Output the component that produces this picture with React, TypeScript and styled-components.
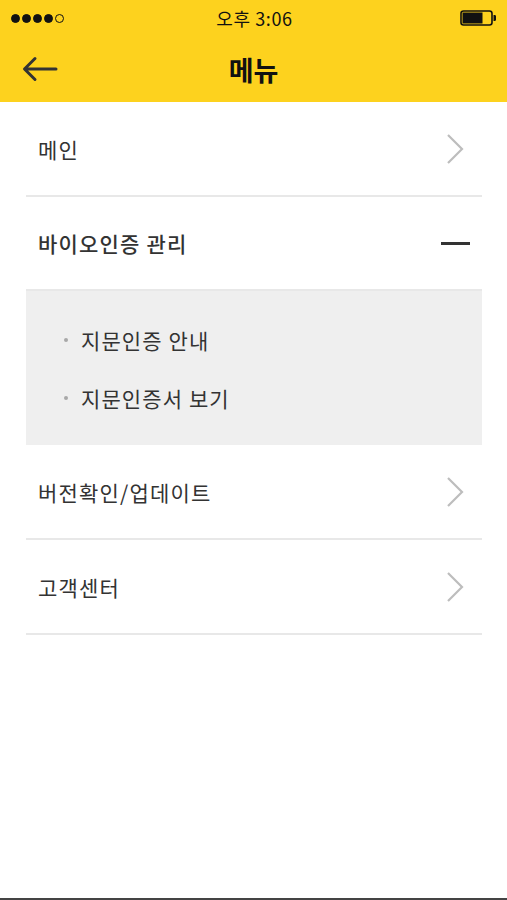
import React from "react";
import styled, { createGlobalStyle } from "styled-components";

const GlobalStyle = createGlobalStyle`
  html, body { margin: 0; padding: 0; background: #ffffff; }
  body { font-family: "Noto Sans CJK KR", "Noto Sans", sans-serif; }
  * { box-sizing: border-box; }
`;

const Screen = styled.div`
  width: 507px;
  height: 900px;
  display: flex;
  flex-direction: column;
  background: #ffffff;
  border-bottom: 2px solid #444444;
`;

const Header = styled.header`
  background: #fdd21e;
  height: 102px;
  display: flex;
  flex-direction: column;
`;

const StatusBar = styled.div`
  height: 36px;
  display: grid;
  grid-template-columns: 1fr auto 1fr;
  align-items: center;
  padding: 0 9px 0 11px;
`;

const Signal = styled.div`
  display: flex;
  gap: 2px;
  align-items: center;
`;

const Dot = styled.span<{ $filled: boolean }>`
  width: 9px;
  height: 9px;
  border-radius: 50%;
  border: 1.5px solid #111;
  background: ${(p) => (p.$filled ? "#111" : "transparent")};
`;

const Time = styled.div`
  font-size: 18px;
  color: #111;
  letter-spacing: 0.6px;
`;

const BatteryWrap = styled.div`
  justify-self: end;
  display: flex;
  align-items: center;
`;

const NavBar = styled.div`
  flex: 1;
  display: grid;
  grid-template-columns: 60px 1fr 60px;
  align-items: center;
  padding-left: 22px;
`;

const BackButton = styled.div`
  display: flex;
  align-items: center;
`;

const Title = styled.h1`
  margin: 0 -60px;
  text-align: center;
  font-size: 27px;
  font-weight: 700;
  color: #111;
  padding-right: 22px;
`;

const List = styled.div`
  padding: 0 25px 0 26px;
  display: flex;
  flex-direction: column;
`;

const Row = styled.div<{ $height?: number }>`
  height: ${(p) => p.$height ?? 95}px;
  display: flex;
  align-items: center;
  justify-content: space-between;
  padding: 0 12px;
  border-bottom: 2px solid #e8e8e8;
`;

const RowLabel = styled.span<{ $bold?: boolean }>`
  font-size: 21px;
  color: #333;
  font-weight: ${(p) => (p.$bold ? 500 : 400)};
  letter-spacing: 1.2px;
`;

const SubPanel = styled.div`
  background: #efefef;
  padding: 20px 0 18px 0;
  display: flex;
  flex-direction: column;
`;

const SubItem = styled.div`
  height: 58px;
  display: flex;
  align-items: center;
  padding-left: 38px;
  gap: 13px;
  font-size: 21px;
  letter-spacing: 1.1px;
  color: #333;
`;

const Bullet = styled.span`
  width: 4px;
  height: 4px;
  border-radius: 50%;
  background: #a8a8a8;
`;

const Minus = styled.span`
  width: 29px;
  height: 3px;
  background: #333;
`;

const Chevron = () => (
  <svg width="20" height="32" viewBox="0 0 20 32" style={{ marginRight: 5 }}>
    <path d="M3 2 L17 16 L3 30" fill="none" stroke="#bdbdbd" strokeWidth="2.2" />
  </svg>
);

const BackArrow = () => (
  <svg width="36" height="26" viewBox="0 0 36 26">
    <path
      d="M34 13 H3 M13 2.5 L2.5 13 L13 23.5"
      fill="none"
      stroke="#333"
      strokeWidth="3"
      strokeLinecap="round"
      strokeLinejoin="round"
    />
  </svg>
);

const Battery = () => (
  <svg width="38" height="16" viewBox="0 0 38 16">
    <rect x="1" y="1" width="31" height="14" rx="2.5" fill="none" stroke="#111" strokeWidth="1.6" />
    <rect x="2.5" y="2.5" width="20" height="11" fill="#111" />
    <path d="M33.5 5 H35 A1.2 1.2 0 0 1 36 6.2 V9.8 A1.2 1.2 0 0 1 35 11 H33.5 Z" fill="#111" />
  </svg>
);

export default function App() {
  return (
    <>
      <GlobalStyle />
      <Screen>
        <Header>
          <StatusBar>
            <Signal>
              {[true, true, true, true, false].map((f, i) => (
                <Dot key={i} $filled={f} />
              ))}
            </Signal>
            <Time>오후 3:06</Time>
            <BatteryWrap>
              <Battery />
            </BatteryWrap>
          </StatusBar>
          <NavBar>
            <BackButton>
              <BackArrow />
            </BackButton>
            <Title>메뉴</Title>
            <span />
          </NavBar>
        </Header>
        <List>
          <Row>
            <RowLabel>메인</RowLabel>
            <Chevron />
          </Row>
          <Row $height={94}>
            <RowLabel $bold>바이오인증 관리</RowLabel>
            <Minus />
          </Row>
          <SubPanel>
            <SubItem>
              <Bullet />
              지문인증 안내
            </SubItem>
            <SubItem>
              <Bullet />
              지문인증서 보기
            </SubItem>
          </SubPanel>
          <Row>
            <RowLabel>버전확인/업데이트</RowLabel>
            <Chevron />
          </Row>
          <Row>
            <RowLabel>고객센터</RowLabel>
            <Chevron />
          </Row>
        </List>
      </Screen>
    </>
  );
}
